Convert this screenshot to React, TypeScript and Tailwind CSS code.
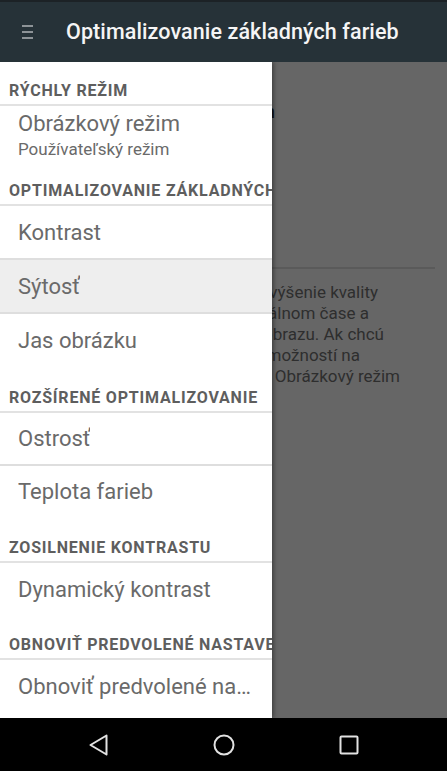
import React from "react";

const font = { fontFamily: "Roboto, 'Noto Sans', sans-serif" };

function Cat({ label, h }: { label: string; h: string }) {
  return (
    <>
      <div className={`${h} flex items-end pb-[1px] pl-[9px] overflow-hidden whitespace-nowrap text-[16px] tracking-[0.8px] font-bold text-[#5e5e5e]`}>
        {label}
      </div>
      <div className="h-[2px] bg-[#e2e2e2]" />
    </>
  );
}

function Item({ label, h, selected, divider = true }: { label: string; h: string; selected?: boolean; divider?: boolean }) {
  return (
    <>
      <div className={`${h} flex items-center pl-[18px] pr-[14px] text-[22px] text-[#6a6a6a] whitespace-nowrap overflow-hidden ${selected ? "bg-[#eeeeee]" : ""}`}>
        <span className="truncate">{label}</span>
      </div>
      {divider && <div className="h-[2px] bg-[#dedede]" />}
    </>
  );
}

export default function App() {
  return (
    <div className="w-[447px] h-[771px] flex flex-col overflow-hidden" style={font}>
      <div className="h-[2px] bg-[#1c2226]" />
      <div className="h-[60px] bg-[#263238] flex items-center shrink-0">
        <div className="w-[66px] flex justify-start pl-[22px]">
          <div className="flex flex-col gap-[4px]">
            <div className="w-[11px] h-[2px] bg-[#8d9397]" />
            <div className="w-[11px] h-[2px] bg-[#8d9397]" />
            <div className="w-[11px] h-[2px] bg-[#8d9397]" />
          </div>
        </div>
        <div className="text-[21.5px] font-medium text-[#f5f5f5] tracking-[0.1px]">Optimalizovanie základných farieb</div>
      </div>
      <div className="relative h-[656px] bg-[#666666] overflow-hidden">
        {/* dimmed page behind */}
        <div className="flex flex-col">
          <div className="h-[38px]" />
          <div className="text-right whitespace-nowrap text-[18px] font-medium text-[#111] pr-[172px] leading-[24px]">Obrázkový režim</div>
          <div className="h-[143px]" />
          <div className="h-[2px] ml-[12px] mr-[12px] bg-[#5a5a5a]" />
          <div className="h-[13px]" />
          <div className="text-[17px] leading-[21px] text-[#2e2e2e] whitespace-nowrap">
            <div className="text-right pr-[69px]">zvýšenie kvality</div>
            <div className="text-right pr-[78px]">v reálnom čase a</div>
            <div className="text-right pr-[63px]">obrazu. Ak chcú</div>
            <div className="text-right pr-[87px]">možností na</div>
            <div className="text-right pr-[47px]">Obrázkový režim</div>
          </div>
        </div>
        {/* drawer */}
        <div className="absolute left-0 top-0 w-[272px] h-full bg-white flex flex-col shadow-[2px_0_4px_rgba(0,0,0,0.35)]">
          <Cat label="RÝCHLY REŽIM" h="h-[42px]" />
          <div className="h-[57px] flex flex-col pl-[18px] text-[#6a6a6a]">
            <div className="h-[5px]" />
            <div className="text-[22px] leading-[26px]">Obrázkový režim</div>
            <div className="h-[2px]" />
            <div className="text-[17px] leading-[20px]">Používateľský režim</div>
          </div>
          <Cat label="OPTIMALIZOVANIE ZÁKLADNÝCH FARIEB" h="h-[41px]" />
          <Item label="Kontrast" h="h-[52px]" />
          <Item label="Sýtosť" h="h-[52px]" selected />
          <Item label="Jas obrázku" h="h-[52px]" divider={false} />
          <Cat label="ROZŠÍRENÉ OPTIMALIZOVANIE" h="h-[45px]" />
          <Item label="Ostrosť" h="h-[51px]" />
          <Item label="Teplota farieb" h="h-[51px]" divider={false} />
          <Cat label="ZOSILNENIE KONTRASTU" h="h-[44px]" />
          <Item label="Dynamický kontrast" h="h-[52px]" divider={false} />
          <Cat label="OBNOVIŤ PREDVOLENÉ NASTAVENIA" h="h-[43px]" />
          <Item label="Obnoviť predvolené nastavenia" h="h-[52px]" divider={false} />
        </div>
      </div>
      <div className="h-[53px] bg-black flex items-center justify-center gap-[101px] shrink-0">
        <svg width="24" height="24" viewBox="0 0 24 24" fill="none">
          <path d="M19.5 2.5 L3.5 12 L19.5 21.5 Z" stroke="#e2e2e2" strokeWidth="2" strokeLinejoin="round" />
        </svg>
        <svg width="24" height="24" viewBox="0 0 24 24" fill="none">
          <circle cx="12" cy="12" r="9.5" stroke="#e2e2e2" strokeWidth="2" />
        </svg>
        <svg width="24" height="24" viewBox="0 0 24 24" fill="none">
          <rect x="3.5" y="3.5" width="17" height="17" rx="1" stroke="#e2e2e2" strokeWidth="2" />
        </svg>
      </div>
    </div>
  );
}
